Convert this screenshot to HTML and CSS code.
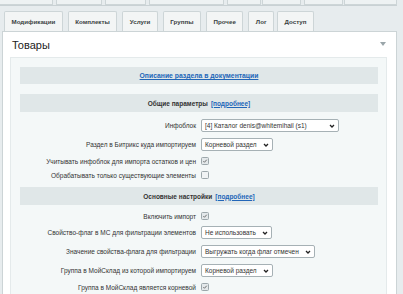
FILE: index.html
```html
<!DOCTYPE html>
<html lang="ru">
<head>
  <meta charset="UTF-8" />
  <title>Товары</title>
  <link rel="stylesheet" href="styles.css">
</head>
<body>
  <div class="wrap">
    <div class="stubs">
      <div class="stub"></div><div class="stub"></div><div class="stub"></div><div class="stub"></div>
      <div class="stub"></div><div class="stub"></div><div class="stub"></div><div class="stub"></div>
    </div>

    <div class="tabs">
      <div class="tab">Модификации</div>
      <div class="tab">Комплекты</div>
      <div class="tab">Услуги</div>
      <div class="tab">Группы</div>
      <div class="tab">Прочее</div>
      <div class="tab">Лог</div>
      <div class="tab">Доступ</div>
    </div>

    <div class="panel">
      <div class="panel-head">
        <span class="panel-title">Товары</span>
        <span class="collapse"></span>
      </div>

      <div class="inner">
        <div class="band doc"><a href="#" class="link">Описание раздела в документации</a></div>

        <div class="band">Общие параметры <a href="#" class="link">[подробнее]</a></div>
        <div class="row sel">
          <div class="lbl">Инфоблок</div>
          <div class="ctl"><div class="select wide">[4] Каталог denis@whitemihail (s1)<svg class="chev" viewBox="0 0 6 4"><path d="M1 1l2 2 2-2" /></svg></div></div>
        </div>
        <div class="row sel">
          <div class="lbl">Раздел в Битрикс куда импортируем</div>
          <div class="ctl"><div class="select">Корневой раздел<svg class="chev" viewBox="0 0 6 4"><path d="M1 1l2 2 2-2" /></svg></div></div>
        </div>
        <div class="row chk">
          <div class="lbl">Учитывать инфоблок для импорта остатков и цен</div>
          <div class="ctl"><span class="cb on"><svg viewBox="0 0 8 8"><path d="M1.8 4.2l1.5 1.5 3-3.4" /></svg></span></div>
        </div>
        <div class="row chk">
          <div class="lbl">Обрабатывать только существующие элементы</div>
          <div class="ctl"><span class="cb"></span></div>
        </div>

        <div class="band gap">Основные настройки <a href="#" class="link">[подробнее]</a></div>
        <div class="row chk">
          <div class="lbl">Включить импорт</div>
          <div class="ctl"><span class="cb on"><svg viewBox="0 0 8 8"><path d="M1.8 4.2l1.5 1.5 3-3.4" /></svg></span></div>
        </div>
        <div class="row sel">
          <div class="lbl">Свойство-флаг в МС для фильтрации элементов</div>
          <div class="ctl"><div class="select">Не использовать<svg class="chev" viewBox="0 0 6 4"><path d="M1 1l2 2 2-2" /></svg></div></div>
        </div>
        <div class="row sel">
          <div class="lbl">Значение свойства-флага для фильтрации</div>
          <div class="ctl"><div class="select">Выгружать когда флаг отмечен<svg class="chev" viewBox="0 0 6 4"><path d="M1 1l2 2 2-2" /></svg></div></div>
        </div>
        <div class="row sel">
          <div class="lbl">Группа в МойСклад из которой импортируем</div>
          <div class="ctl"><div class="select">Корневой раздел<svg class="chev" viewBox="0 0 6 4"><path d="M1 1l2 2 2-2" /></svg></div></div>
        </div>
        <div class="row chk">
          <div class="lbl">Группа в МойСклад является корневой</div>
          <div class="ctl"><span class="cb on"><svg viewBox="0 0 8 8"><path d="M1.8 4.2l1.5 1.5 3-3.4" /></svg></span></div>
        </div>
      </div>
    </div>
  </div>
</body>
</html>
```

FILE: styles.css
```css
body {
  margin: 0;
  background: #e7ecee;
  font-family: "Liberation Sans", Arial, sans-serif;
  color: #333;
  overflow: hidden;
  height: 294px;
}

.wrap { padding: 0 6px 0 2px; }

/* bottoms of the first tab row, cut off by the window */
.stubs {
  display: flex;
  height: 5px;
  border-bottom: 1px solid #c9d1d4;
  margin-left: -2px;
}
.stub {
  border: 1px solid #cdd5d7;
  border-top: none;
  background: #eef2f3;
  margin-right: 3px;
}
.stub:nth-child(1) { width: 52px; border-left: none; margin-right: 3px; }
.stub:nth-child(2) { width: 44px; }
.stub:nth-child(3) { width: 39px; }
.stub:nth-child(4) { width: 73px; }
.stub:nth-child(5) { width: 32px; margin-right: 1px; }
.stub:nth-child(6) { width: 37px; }
.stub:nth-child(7) { width: 37px; margin-right: 1px; }
.stub:nth-child(8) { flex: 1; margin-right: 0; }

.tabs {
  display: flex;
  gap: 5px;
  padding-left: 2px;
  margin-top: 5px;
}
.tab {
  height: 19px;
  line-height: 19px;
  padding: 0 6.5px;
  background: #f3f5f5;
  border: 1px solid #cdd5d7;
  border-bottom: none;
  border-radius: 2px 2px 0 0;
  font-size: 6.2px;
  font-weight: bold;
  color: #3a3f41;
}
.tabs .tab:nth-child(6) { margin-right: -2px; }

.panel {
  background: #fff;
  border: 1px solid #ccd4d6;
  border-bottom: none;
  padding: 0 9px 0 7px;
  height: 300px;
}
.panel-head {
  display: flex;
  align-items: center;
  justify-content: space-between;
  height: 25px;
  padding: 0 1px 0 2px;
}
.panel-title {
  font-size: 11px;
  color: #222;
}
.collapse {
  width: 0;
  height: 0;
  border-left: 3.5px solid transparent;
  border-right: 3.5px solid transparent;
  border-top: 4px solid #9aa5a9;
  margin-top: -1px;
}

.inner {
  background: #f4f8f8;
  border: 1px solid #e4eaeb;
  padding: 9px 8px 0 9px;
  height: 300px;
}

.band {
  background: #e0e7e8;
  height: 17px;
  display: flex;
  align-items: center;
  justify-content: center;
  gap: 3px;
  font-size: 6.5px;
  font-weight: bold;
  color: #333;
  margin-bottom: 10px;
}
.band.doc { font-size: 6.8px; }
.band + .row { margin-top: -6px; }
.band.gap { margin-top: 5px; height: 18px; }
.band:nth-child(2) { height: 18px; }

.link {
  color: #2266b8;
  text-decoration: underline;
}

.row {
  display: grid;
  grid-template-columns: 176px 1fr;
  gap: 5px;
  align-items: center;
  font-size: 6.5px;
}
.row.sel { height: 19px; }
.row.chk { height: 14px; }
.lbl { text-align: right; color: #333; white-space: nowrap; }
.ctl { display: flex; align-items: center; }

.select {
  display: flex;
  align-items: center;
  justify-content: space-between;
  gap: 6px;
  height: 11px;
  padding: 0 3px 0 3px;
  background: #fff;
  border: 1px solid #a6b1b5;
  border-radius: 2px;
  color: #333;
  white-space: nowrap;
}
.select.wide { width: 130px; }
.chev {
  width: 6px;
  height: 4px;
  fill: none;
  stroke: #222;
  stroke-width: 1.3;
}

.cb {
  width: 6px;
  height: 6px;
  border: 1px solid #9ca7ab;
  border-radius: 1.5px;
  background: #f0f3f4;
  display: inline-flex;
}
.cb.on { background: #e3e8ea; }
.cb svg {
  width: 6px;
  height: 6px;
  fill: none;
  stroke: #555;
  stroke-width: 1.1;
}
```
